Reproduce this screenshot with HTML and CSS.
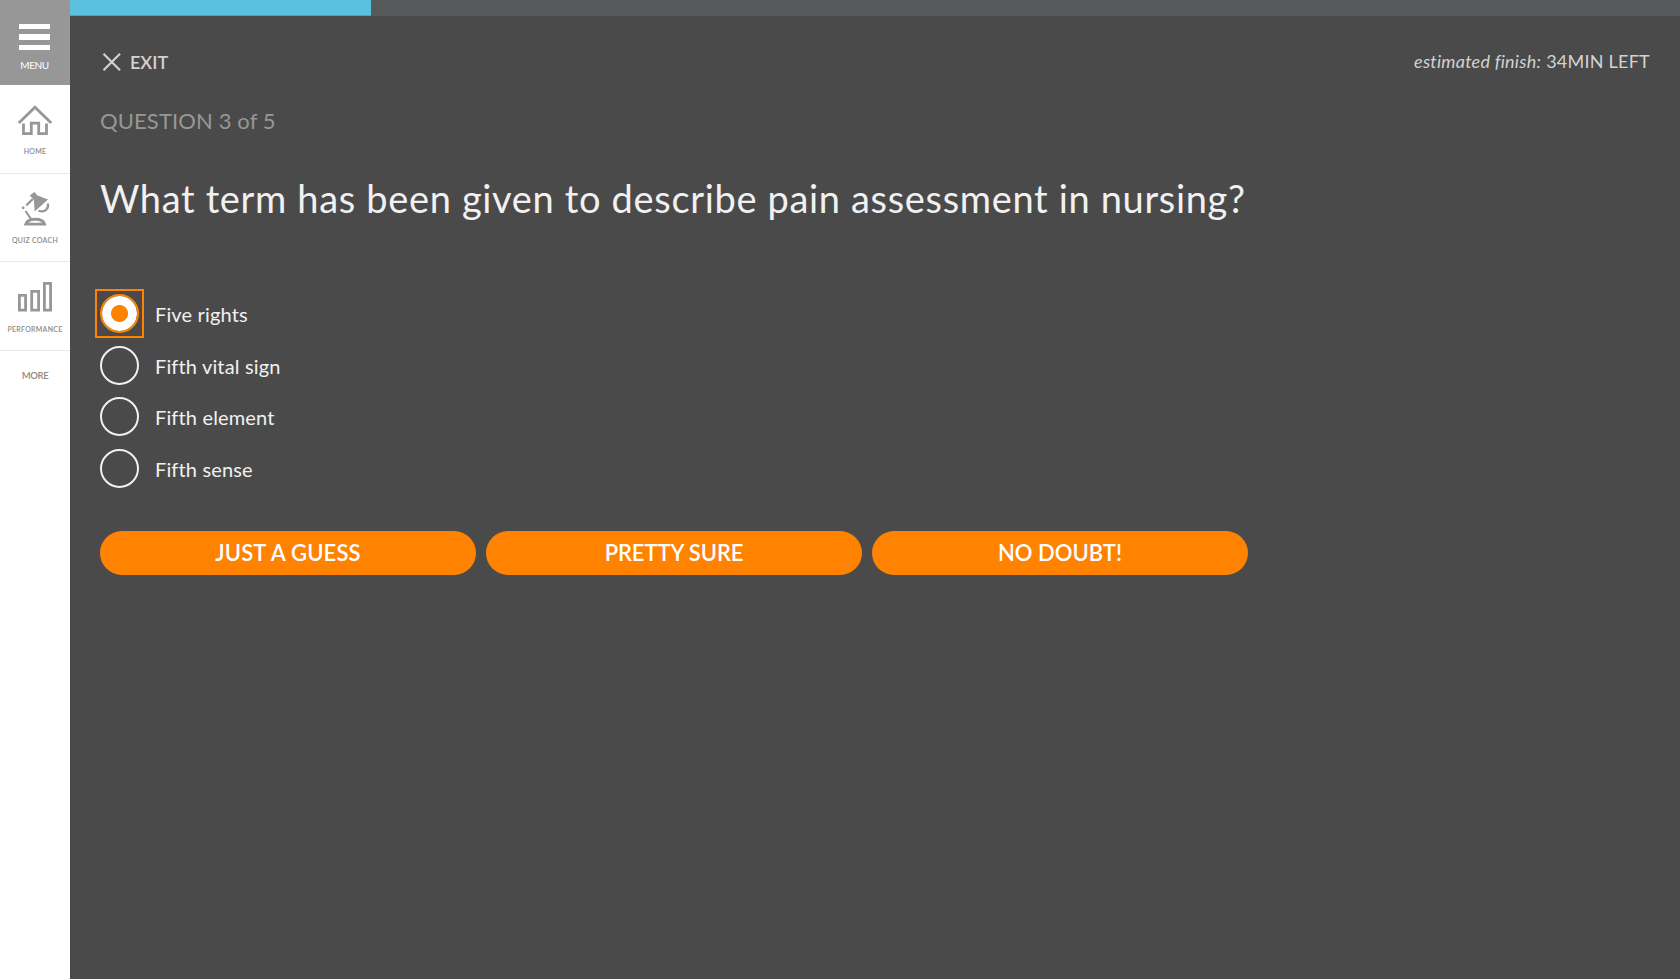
FILE: index.html
```html
<!DOCTYPE html>
<html lang="en"><head><meta charset="utf-8"><title>Quiz</title><link rel="stylesheet" href="styles.css"></head>
<body>
<nav class="sidebar">
  <a class="nav-menu"><span class="bars"><i></i><i></i><i></i></span><span class="menu-label">MENU</span></a>
  <a class="nav-item">
    <svg class="nav-icon" width="36" height="34" viewBox="0 0 36 34" fill="none" stroke="#979797" stroke-width="2.8"><path d="M1.8 20 18 4.2 34.2 20"/><path d="M6.5 20.5V30.6H14.3V20.2H21.7V30.6H29.5V20.5"/></svg>
    <span class="small-label">HOME</span></a>
  <a class="nav-item">
    <svg class="nav-icon" width="36" height="34" viewBox="0 0 36 34" fill="none" stroke="#979797"><path fill="#979797" stroke="none" d="M12.8 3.600 17.400 0 20.400 3.500 31 7.600 17.700 19.500 16.800 7.800Z"/><path stroke-width="2.2" d="M9.3 13.400 15.800 7M8.500 19 14 27"/><circle cx="6.2" cy="15.800" r="1.4" fill="#979797" stroke="none"/><path stroke-width="2.2" d="M30.500 11.500C32.500 15 28.500 21.500 21.500 18.700"/><path stroke-width="2.8" d="M8.800 32.200C11 25.600 25.600 25.600 27.600 32.200Z"/></svg>
    <span class="small-label">QUIZ COACH</span></a>
  <a class="nav-item">
    <svg class="nav-icon" width="36" height="34" viewBox="0 0 36 34" fill="none" stroke="#979797" stroke-width="2.8"><path d="M2.4 15.400h6.200v14.800H2.400ZM14.700 11.400h6.900v18.800h-6.900ZM27.400 3.400h6.200v26.800h-6.200Z"/></svg>
    <span class="small-label">PERFORMANCE</span></a>
  <a class="nav-more">MORE</a>
</nav>
<main class="quiz">
  <div class="progress"><div class="progress-done"></div></div>
  <header class="topbar">
    <a class="exit"><svg width="20" height="20" viewBox="0 0 20 20" fill="none" stroke="#d2d2d2" stroke-width="2.2"><path d="M1.5 1.8 18 18.300M18 1.800 1.500 18.300"/></svg><span>EXIT</span></a>
    <div class="finish"><em>estimated finish:</em><span>34MIN LEFT</span></div>
  </header>
  <div class="counter">QUESTION 3 of 5</div>
  <h1 class="question">What term has been given to describe pain assessment in nursing?</h1>
  <div class="options">
    <label class="option"><span class="focus"><span class="radio selected"></span></span><span class="option-text">Five rights</span></label>
    <label class="option"><span class="radio"></span><span class="option-text">Fifth vital sign</span></label>
    <label class="option"><span class="radio"></span><span class="option-text">Fifth element</span></label>
    <label class="option"><span class="radio"></span><span class="option-text">Fifth sense</span></label>
  </div>
  <div class="answers">
    <button class="answer guess">JUST A GUESS</button>
    <button class="answer sure">PRETTY SURE</button>
    <button class="answer">NO DOUBT!</button>
  </div>
</main>
</body></html>
```

FILE: styles.css
```css
* { box-sizing: border-box; }
body { margin: 0; display: flex; height: 979px; overflow: hidden; background: #4a4a4a; font-family: Lato, "Open Sans", sans-serif; }

.sidebar { width: 70px; background: #fff; display: flex; flex-direction: column; color: #8b8b8b; }
.nav-menu { height: 85px; background: #979797; color: #fff; padding: 24px 1px 0 0; display: flex; flex-direction: column; align-items: center; font-size: 10px; }
.bars { display: flex; flex-direction: column; gap: 5px; }
.bars i { width: 31px; height: 5.3px; background: #fff; }
.menu-label { margin-top: 8px; line-height: 14px; letter-spacing: -.4px; }
.nav-item { height: 88.7px; border-bottom: 1px solid #e8e8e8; display: flex; flex-direction: column; align-items: center; padding-top: 18px; }
.nav-icon { display: block; }
.small-label { font-size: 7px; font-weight: 600; line-height: 10px; margin-top: 9.4px; letter-spacing: .25px; }
.nav-more { text-align: center; padding-top: 18px; font-size: 9.5px; line-height: 14px; font-weight: 600; letter-spacing: -.35px; }

.quiz { flex: 1; color: #f1f1f1; display: flex; flex-direction: column; }
.progress { height: 16px; background: #58595b; }
.progress-done { width: 301px; height: 16px; background: #5bc0de; border-bottom: 1px solid #46a6c3; }
.topbar { display: flex; justify-content: space-between; padding: 36px 30px 0 32px; color: #d2d2d2; font-size: 18px; line-height: 20px; }
.exit { display: flex; gap: 8px; font-weight: 600; }
.finish { display: flex; gap: 5px; margin-top: -1px; letter-spacing: .24px; }
.counter { padding: 34px 0 0 30px; font-size: 22px; line-height: 30px; letter-spacing: .12px; color: #979797; }
.question { margin: 37px 0 0 30px; font-size: 38px; line-height: 50px; font-weight: 400; letter-spacing: .66px; white-space: nowrap; }

.options { padding: 64.7px 0 0 30px; }
.option { display: flex; gap: 16px; height: 51.7px; font-size: 20px; letter-spacing: .15px; align-items: center; }
.focus { outline: 2px solid #ff8300; outline-offset: 3px; }
.radio { display: block; width: 39px; height: 39px; border: 2px solid #f1f1f1; border-radius: 50%; }
.selected { border-color: #ff8300; background: radial-gradient(circle, #ff8300 8px, #fff 9px) padding-box; }
.option-text { padding-top: 1px; }

.answers { display: flex; gap: 10px; padding: 36.5px 30px; }
.answer { width: 376px; height: 44px; padding: 0; border: 0; border-radius: 22px; background: #ff8300; color: #fff; font: 600 22px Lato, sans-serif; }
.guess { letter-spacing: .15px; }
.sure { letter-spacing: -.1px; }
```
